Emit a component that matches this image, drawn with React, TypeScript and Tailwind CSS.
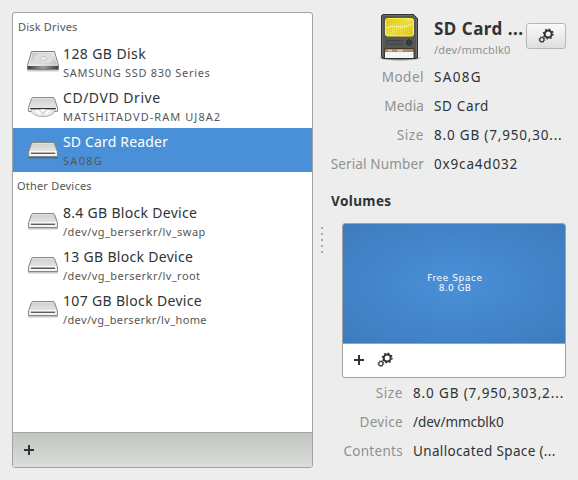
import React from "react";

type DriveKind = "disk" | "optical" | "removable";

function DriveIcon({ kind }: { kind: DriveKind }) {
  return (
    <svg width="34" height="26" viewBox="0 0 34 26" className="shrink-0">
      <defs>
        <linearGradient id="driveTop" x1="0" y1="0" x2="0" y2="1">
          <stop offset="0" stopColor="#cfd0ce" />
          <stop offset="1" stopColor="#eeeeed" />
        </linearGradient>
        <linearGradient id="diskTop" x1="0" y1="0" x2="1" y2="1">
          <stop offset="0" stopColor="#b9bab8" />
          <stop offset="0.5" stopColor="#e6e6e5" />
          <stop offset="1" stopColor="#a4a6a3" />
        </linearGradient>
        <linearGradient id="diskFront" x1="0" y1="0" x2="1" y2="0">
          <stop offset="0" stopColor="#3c413e" />
          <stop offset="0.5" stopColor="#9a9f9c" />
          <stop offset="1" stopColor="#3c413e" />
        </linearGradient>
      </defs>
      {kind === "disk" && (
        <g>
          <rect x="1" y="20.500" width="32" height="3" rx="1.500" fill="#000" opacity="0.2" />
          <path d="M5.500 3.500h23l4 14v4h-31v-4z" fill="url(#diskTop)" stroke="#7d7f7c" />
          <path d="M6.300 4.500h21.400l3.600 12.500h-28.600z" fill="none" stroke="#f0f0ef" strokeWidth="0.700" />
          <ellipse cx="17.500" cy="10.500" rx="9.500" ry="5.500" fill="#dededd" stroke="#cfd0ce" strokeWidth="0.600" />
          <ellipse cx="17.500" cy="10.500" rx="3.400" ry="1.800" fill="#efefef" stroke="#b4b4b4" strokeWidth="0.700" />
          <path d="M2 18h30v3H2z" fill="url(#diskFront)" />
        </g>
      )}
      {kind === "removable" && (
        <g>
          <rect x="2" y="20" width="30" height="2.500" rx="1" fill="#000" opacity="0.22" />
          <path d="M7 6.500h20q1.200 0 1.500 1l3 8.500v4.500h-29v-4.500l3-8.500q.3-1 1.500-1z" fill="url(#driveTop)" stroke="#858784" />
          <path d="M7 7.500h20" stroke="#e6e6e5" strokeWidth="0.800" />
          <path d="M3.500 15.500h27" stroke="#fafafa" />
          <path d="M3.500 18h27v2H3.500z" fill="#f6f6f5" />
          <path d="M5 17.200h24" stroke="#2c3138" strokeWidth="1.100" />
        </g>
      )}
      {kind === "optical" && (
        <g>
          <path d="M7 5.500h20q1.200 0 1.500 1l3 9v4h-29v-4l3-9q.3-1 1.500-1z" fill="url(#driveTop)" stroke="#8b8d8a" />
          <path d="M7 6.500h20" stroke="#e6e6e5" strokeWidth="0.800" />
          <path d="M3 16h28v3H3z" fill="#f8f8f8" />
          <path d="M5 17.500c0 4.500 5.500 7 12 7s12-2.500 12-7z" fill="#e9e9e8" stroke="#a3a4a2" strokeWidth="0.900" />
          <path d="M9 18l5 5 2-5z M25 18l-5 5-2-5z" fill="#fff" />
          <ellipse cx="17" cy="18.500" rx="3.300" ry="1.800" fill="#fff" stroke="#b0b0b0" strokeWidth="0.700" />
          <path d="M4 16.500h26" stroke="#353535" />
        </g>
      )}
    </svg>
  );
}

function SdCardIcon() {
  const stripes = [387.5, 389.5, 391.5, 393.5, 395.5, 397.5, 399.5, 401.5, 403.5, 405.5, 407.5, 409.5, 411.5];
  return (
    <svg width="50" height="52" viewBox="376 11 50 52" className="block">
      <defs>
        <linearGradient id="gold" x1="0" y1="0" x2="1" y2="1">
          <stop offset="0" stopColor="#e0ca1c" />
          <stop offset="0.5" stopColor="#f2e44c" />
          <stop offset="1" stopColor="#dfc81b" />
        </linearGradient>
        <radialGradient id="cardShadow">
          <stop offset="0.600" stopColor="#000" stopOpacity="0.450" />
          <stop offset="1" stopColor="#000" stopOpacity="0" />
        </radialGradient>
      </defs>
      <ellipse cx="400" cy="58" rx="22" ry="3" fill="url(#cardShadow)" />
      <path d="M383.500 14.500h30l4 4v39q0 1-1 1h-33q-2 0-2-2v-40q0-2 2-2z" fill="#555753" stroke="#2e3431" />
      <path d="M382.500 56v-39.500q0-1 1-1h29.500l3.500 3.500v37" fill="none" stroke="#6b6e69" />
      <rect x="385.500" y="18.500" width="28" height="17.500" rx="2" fill="url(#gold)" stroke="#fdf04c" />
      {stripes.map((x) => (
        <path key={x} d={`M${x} 21v13`} stroke="#c9b01a" strokeWidth="0.600" opacity="0.500" />
      ))}
      <path d="M387 28c8-5 12 3 25-4" fill="none" stroke="#fbf7a3" />
      <rect x="386.500" y="40.500" width="16" height="4" rx="1" fill="#50534f" stroke="#414541" />
      <circle cx="409" cy="42.500" r="2.700" fill="#3a3f3c" stroke="#2b302d" />
      <path d="M385 49h29v9h-29z" fill="#f4f4f2" />
      <path d="M385 49h29v3h-29z" fill="#b98645" />
      <path d="M388 50.500h4M397 50.500h6" stroke="#eed09a" strokeWidth="1.600" />
      <path d="M384.500 58v-9.500h29.500v9.500" fill="none" stroke="#363b38" />
    </svg>
  );
}

function GearsIcon() {
  return (
    <svg width="16" height="16" viewBox="0 0 16 16" className="block" fill="none" stroke="#2e3436">
      <circle cx="10.200" cy="6" r="3.500" strokeWidth="2" />
      <circle cx="10.200" cy="6" r="4.800" strokeWidth="1.400" strokeDasharray="1.700 2.070" />
      <circle cx="3.900" cy="11.600" r="2.100" strokeWidth="1.100" />
      <circle cx="3.900" cy="11.600" r="2.900" strokeWidth="1" strokeDasharray="1.100 1.178" />
    </svg>
  );
}

function PlusIcon() {
  return (
    <svg width="10" height="10" viewBox="0 0 10 10" className="block">
      <path d="M4 0h2v4h4v2H6v4H4V6H0V4h4z" fill="#2e3436" />
    </svg>
  );
}

interface DriveRowProps {
  kind: DriveKind;
  name: string;
  detail: string;
  nameClass: string;
  detailClass: string;
  selected?: boolean;
}

function DriveRow({ kind, name, detail, nameClass, detailClass, selected }: DriveRowProps) {
  return (
    <li className={`flex h-11 pl-[13px] ${selected ? "bg-[#4a90d9] text-white" : "text-[#2e3436]"}`}>
      <div className="pt-2">
        <DriveIcon kind={kind} />
      </div>
      <div className="pl-[3px] pt-1">
        <div className={`text-[14px] leading-5 ${nameClass}`}>{name}</div>
        <div className={`text-[11px] leading-[18px] text-[#555753] ${detailClass}`}>{detail}</div>
      </div>
    </li>
  );
}

interface PropertyProps {
  label: string;
  value: string;
  labelWidth: string;
  labelClass: string;
  valueClass: string;
}

function Property({ label, value, labelWidth, labelClass, valueClass }: PropertyProps) {
  return (
    <div className="flex h-[29px] items-center gap-[10px] pb-[2px] text-[13.500px] leading-5">
      <dt className={`text-right text-[#8f9290] ${labelWidth} ${labelClass}`}>{label}</dt>
      <dd className={`text-[#2e3436] ${valueClass}`}>{value}</dd>
    </div>
  );
}

export default function App() {
  return (
    <main className="flex h-[480px] w-[578px] overflow-hidden whitespace-nowrap bg-[#ededed] py-3 pl-3 font-['Noto_Sans','Open_Sans',sans-serif]">
      <section className="flex h-[456px] w-[301px] shrink-0 flex-col overflow-hidden rounded-[3px] border border-[#a1a3a1] bg-white">
        <h2 className="h-[27px] pl-[5px] text-[11px] leading-[27px] text-[#555753] tracking-[0.2px]">Disk Drives</h2>
        <ul>
          <DriveRow kind="disk" name="128 GB Disk" detail="SAMSUNG SSD 830 Series" nameClass="tracking-[0.4px]" detailClass="tracking-[0.7px]" />
          <DriveRow kind="optical" name="CD/DVD Drive" detail="MATSHITADVD-RAM UJ8A2" nameClass="tracking-[0.53px]" detailClass="tracking-[1.05px]" />
          <DriveRow kind="removable" name="SD Card Reader" detail="SA08G" nameClass="tracking-[0.17px]" detailClass="tracking-[1.3px]" selected />
        </ul>
        <h2 className="h-[27px] pl-[4px] text-[11px] leading-[27px] text-[#555753] tracking-[0.2px]">Other Devices</h2>
        <ul className="grow">
          <DriveRow kind="removable" name="8.4 GB Block Device" detail="/dev/vg_berserkr/lv_swap" nameClass="tracking-[0.3px]" detailClass="tracking-[0.45px]" />
          <DriveRow kind="removable" name="13 GB Block Device" detail="/dev/vg_berserkr/lv_root" nameClass="tracking-[0.3px]" detailClass="tracking-[0.45px]" />
          <DriveRow kind="removable" name="107 GB Block Device" detail="/dev/vg_berserkr/lv_home" nameClass="tracking-[0.33px]" detailClass="tracking-[0.37px]" />
        </ul>
        <div className="flex h-[35px] items-center border-t border-[#a1a3a1] bg-linear-to-b from-[#c3c5c1] to-[#dbdddb] pl-[11px]">
          <PlusIcon />
        </div>
      </section>

      <div className="flex w-[17px] shrink-0 flex-col items-center gap-1 pt-[215px]">
        <i className="size-[2px] bg-[#a8aaa4]" />
        <i className="size-[2px] bg-[#a8aaa4]" />
        <i className="size-[2px] bg-[#a8aaa4]" />
        <i className="size-[2px] bg-[#a8aaa4]" />
        <i className="size-[2px] bg-[#a8aaa4]" />
      </div>

      <section className="w-[236px] shrink-0">
        <header className="flex h-[51px]">
          <div className="-mt-px ml-[46px] w-[50px]">
            <SdCardIcon />
          </div>
          <div className="ml-2 w-[92px] shrink-0 pt-[5px]">
            <h1 className="text-[17px] font-bold leading-6 tracking-[0.5px] text-[#2e3436]">SD Card ...</h1>
            <p className="text-[11px] leading-[18px] tracking-[0.2px] text-[#8f9290]">/dev/mmcblk0</p>
          </div>
          <button className="mt-[11px] flex h-[26px] w-10 shrink-0 items-center justify-center rounded-[3px] border border-[#b5b7b5] bg-linear-to-b from-[#fafafa] to-[#dedede]">
            <GearsIcon />
          </button>
        </header>
        <dl>
          <Property label="Model" value="SA08G" labelWidth="w-[94px]" labelClass="tracking-[0.5px]" valueClass="tracking-[1.3px]" />
          <Property label="Media" value="SD Card" labelWidth="w-[94px]" labelClass="tracking-[0.1px]" valueClass="tracking-[0.65px]" />
          <Property label="Size" value="8.0 GB (7,950,30..." labelWidth="w-[94px]" labelClass="tracking-[0.6px]" valueClass="tracking-[0.81px]" />
          <Property label="Serial Number" value="0x9ca4d032" labelWidth="w-[94px]" labelClass="tracking-[0.15px]" valueClass="tracking-[0.83px]" />
        </dl>
        <h2 className="h-[44px] pl-px pt-3 text-[13.500px] font-bold leading-5 tracking-[0.4px] text-[#2e3436]">Volumes</h2>
        <div className="ml-3 h-[155px] w-[224px] overflow-hidden rounded-[3px] border border-[#a1a3a1] bg-white">
          <div className="flex h-[120px] flex-col items-center justify-center border-b border-[#a1a3a1] bg-radial from-[#4a90d9] to-[#3d7bbd] pb-[2px] pl-[2px] font-['DejaVu_Sans','Noto_Sans',sans-serif] text-[9px] leading-[10px] text-white">
            <span className="tracking-[0.6px]">Free Space</span>
            <span className="tracking-[0.4px]">8.0 GB</span>
          </div>
          <div className="flex h-8 items-center gap-[13px] pl-[11px]">
            <PlusIcon />
            <GearsIcon />
          </div>
        </div>
        <dl className="pt-px">
          <Property label="Size" value="8.0 GB (7,950,303,2..." labelWidth="w-[73px]" labelClass="tracking-[0.6px]" valueClass="tracking-[0.86px]" />
          <Property label="Device" value="/dev/mmcblk0" labelWidth="w-[73px]" labelClass="tracking-[0.3px]" valueClass="tracking-[-0.03px]" />
          <Property label="Contents" value="Unallocated Space (..." labelWidth="w-[73px]" labelClass="tracking-[0.3px]" valueClass="tracking-[0.35px]" />
        </dl>
      </section>
    </main>
  );
}
